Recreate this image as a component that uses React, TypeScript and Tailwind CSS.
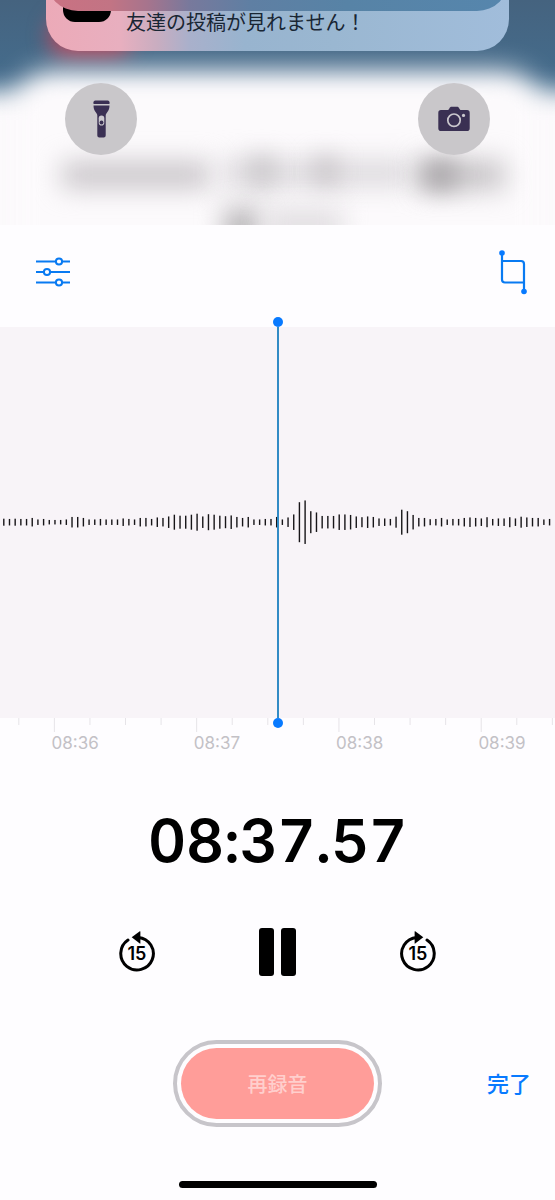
import React from 'react';

// Bar heights in px, one sample every 5.685px
const samples = [
  7, 6.5, 7, 6.5, 6.5, 8.5, 5.5, 6.5, 4.5, 4.5, 4.5, 5.5, 10.5, 10.5, 8.5, 5.5, 5.5, 6.5, 5.5, 5.5,
  5.5, 7.5, 6.5, 5.5, 8.5, 8.5, 6.5, 9.5, 8.5, 11.5, 15, 13, 13, 15, 17, 11.5, 16, 15, 13, 12,
  13.5, 10.5, 8.5, 10.5, 5.5, 5.5, 6.5, 6.5, 10.5, 5.5, 9.5, 15.5, 40, 43.5, 22, 19.5, 12.5, 12.5,
  12.5, 15.5, 15.5, 14.5, 11.5, 10, 11.5, 10.5, 7.5, 7.5, 6.5, 11, 25, 22, 14.5, 8.5, 8.5, 6, 6.5,
  8.5, 5.5, 6.5, 6.5, 8.5, 9.5, 8.5, 7.5, 10, 6.5, 7.5, 7.5, 10, 7.5, 11, 9.5, 8.5, 8.5, 5.5, 6.5,
];

const ticks = Array.from({ length: 16 }, (_, i) => ({ x: 18.8 + i * 35.57, major: i % 4 === 1 }));

const labels = ['08:36', '08:37', '08:38', '08:39'];

const FlashlightIcon: React.FC = () => (
  <svg width="17" height="38" viewBox="0 0 17 38" fill="#3a3053" aria-hidden="true">
    <path d="M.5 4V2.2Q.5.5 2.3.5h12.4q1.8 0 1.8 1.7V4z" />
    <path d="M.5 5.5h16c0 4-1.3 5.500-2.8 7.400-.7.9-1 1.600-1 2.600v20q0 2-2 2H6.300q-2 0-2-2v-20c0-1-.3-1.700-1-2.600C1.800 11 .5 9.500.5 5.500z" />
    <rect x="5.700" y="15.500" width="5.600" height="10" rx="2.800" fill="#cbc8ce" />
    <circle cx="8.500" cy="22.500" r="1.900" />
  </svg>
);

const CameraIcon: React.FC = () => (
  <svg width="32" height="26" viewBox="0 0 32 26" fill="#3a3053" aria-hidden="true">
    <path d="M3 4h6.500c.8 0 1.200-.5 1.700-1.300C11.800 1.300 12.500.7 13.800.7h5c1.300 0 2 .6 2.600 2C21.900 3.500 22.300 4 23.100 4H29q2.700 0 2.700 2.700v15.500q0 2.800-2.700 2.800H3Q.3 25 .3 22.200V6.700Q.3 4 3 4z" />
    <circle cx="16" cy="14.200" r="6.200" fill="none" stroke="#cbc8ce" strokeWidth="1.700" />
    <circle cx="25.500" cy="9.400" r="1.600" fill="#cbc8ce" />
  </svg>
);

const SlidersIcon: React.FC = () => (
  <svg width="34" height="30" viewBox="0 0 34 30" fill="#fefdff" stroke="#087af2" strokeWidth="2" aria-hidden="true">
    <path d="M0 4.500h34M0 15h34M0 25.500h34" />
    <circle cx="23" cy="4.500" r="3.100" />
    <circle cx="11" cy="15" r="3.100" />
    <circle cx="23" cy="25.500" r="3.100" />
  </svg>
);

const TrimIcon: React.FC = () => (
  <svg width="28" height="46" viewBox="0 0 28 46" fill="none" stroke="#087af2" strokeWidth="2.200" aria-hidden="true">
    <path d="M3 4v26.500q0 3 3 3h19M3 12h19q3 0 3 3V42" />
    <g fill="#087aff" stroke="none">
      <circle cx="3" cy="4" r="2.800" />
      <circle cx="25" cy="42.500" r="2.800" />
    </g>
  </svg>
);

const SkipButton: React.FC<{ forward?: boolean; label: string }> = ({ forward, label }) => (
  <button aria-label={label}>
    <svg width="38" height="42" viewBox="0 0 38 42" aria-hidden="true">
      <g transform={forward ? 'translate(38 0) scale(-1 1)' : undefined}>
        <path d="M20.300 6.400A16.300 16.300 0 1 1 10 9.100" fill="none" stroke="#000" strokeWidth="3" strokeLinecap="round" />
        <path d="M13.700 6.200L21.800.3q.6-.3.6.4v11.400q0 .8-.6.4z" />
      </g>
      <text x="18.800" y="29" textAnchor="middle" className="font-['Inter'] text-[18px] font-semibold tracking-[-0.200px]">
        15
      </text>
    </svg>
  </button>
);

const LockScreenPeek: React.FC = () => (
  <header className="relative isolate h-[225px] shrink-0 overflow-hidden bg-[#446583]">
    <div className="absolute inset-x-0 top-0 -z-10 h-[110px] bg-linear-to-b from-[#45637f] to-[#447092]" />
    <div className="absolute left-[48px] top-[14px] -z-10 h-[44px] w-[85px] rounded-3xl bg-[#b04c62] blur-[10px]" />
    <div className="absolute -left-10 -right-10 top-[91px] -z-10 h-[190px] bg-[#fcfafc] blur-[12px]" />
    <div className="absolute left-[16px] right-[16px] top-[71px] -z-10 h-[190px] rounded-t-[36px] bg-[#fcfafc] blur-[14px]" />
    {/* blurred title behind the glass */}
    <div className="absolute left-[62px] top-[162px] -z-10 h-[26px] w-[148px] bg-[#c8c4c8] blur-[13px]" />
    <div className="absolute left-[222px] top-[160px] -z-10 h-[26px] w-[190px] bg-[#dcd9dd] blur-[13px]" />
    <div className="absolute left-[250px] top-[158px] -z-10 h-[26px] w-[24px] bg-[#c5c2c5] blur-[12px]" />
    <div className="absolute left-[315px] top-[158px] -z-10 h-[26px] w-[22px] bg-[#c5c0c4] blur-[12px]" />
    <div className="absolute left-[419px] top-[160px] -z-10 h-[30px] w-[86px] bg-[#c7c4c7] blur-[13px]" />
    <div className="absolute left-[423px] top-[162px] -z-10 h-[26px] w-[34px] bg-[#a5a2a5] blur-[12px]" />
    <div className="absolute left-[224px] top-[208px] -z-10 h-[40px] w-[36px] bg-[#b7b4b7] blur-[13px]" />
    <div className="absolute left-[265px] top-[208px] -z-10 h-[36px] w-[78px] bg-[#e2dfe2] blur-[13px]" />

    <div className="relative mx-[46px] h-[51px] overflow-hidden rounded-b-[32px] bg-[linear-gradient(90deg,#ecaab8_0%,#e8afbf_16%,#c9adc0_24%,#a9b0cb_31%,#98b4cf_43%,#9ab7d1_62%,#a1bddb_100%)]">
      <div className="absolute left-[17px] top-0 h-[22px] w-[48px] rounded-b-[12px] bg-black" />
      <p className="pl-[80px] pt-[8px] font-['Noto_Sans_CJK_JP',sans-serif] text-[20px] leading-[28px] whitespace-nowrap text-[#192634]">
        友達の投稿が見れません！
      </p>
      <div className="absolute inset-x-0 -top-[69px] h-[80px] rounded-[32px] bg-[linear-gradient(90deg,#ca7182_0%,#c27484_14%,#a6748d_22%,#78799c_31%,#5f7fa3_44%,#5783a6_65%,#5686ad_100%)]" />
    </div>

    <div className="mt-[32px] flex justify-between px-[65px]">
      <button aria-label="Flashlight" className="flex size-[72px] items-center justify-center rounded-full bg-[#c9c7ca]">
        <FlashlightIcon />
      </button>
      <button aria-label="Camera" className="flex size-[72px] items-center justify-center rounded-full bg-[#c9c7ca]">
        <CameraIcon />
      </button>
    </div>
  </header>
);

const Waveform: React.FC = () => (
  <section className="relative">
    <div className="h-[391px] bg-[#f8f4f8]">
      <svg width="555" height="391" viewBox="0 0 555 391" aria-hidden="true">
        {samples.map((h, i) => (
          <rect key={i} x={3.1 + i * 5.685} y={195.2 - h / 2} width="1.400" height={h} fill="#171518" />
        ))}
      </svg>
    </div>
    <svg className="block" width="555" height="15" viewBox="0 0 555 15" aria-hidden="true">
      {ticks.map(({ x, major }) => (
        <rect key={x} x={x - 0.5} y="0" width="1" height={major ? 14 : 7} fill="#e6e4e8" />
      ))}
    </svg>
    <div className="flex gap-[94.300px] pl-[51.500px] text-[17px] leading-[20px] text-[#c3c1c6]">
      {labels.map((label) => (
        <span key={label} className="w-[48px] shrink-0 whitespace-nowrap">{label}</span>
      ))}
    </div>
    {/* playhead */}
    <div className="absolute left-[273px] -top-[10px] flex h-[411px] w-[10px] flex-col items-center">
      <span className="size-[10px] shrink-0 rounded-full bg-[#087aff]" />
      <span className="w-[1.500px] flex-1 bg-[#328bc5]" />
      <span className="size-[10px] shrink-0 rounded-full bg-[#087aff]" />
    </div>
  </section>
);

const App: React.FC = () => (
  <main className="flex h-[1200px] w-[555px] flex-col overflow-hidden bg-[#fefdff] font-['Inter','Noto_Sans_CJK_JP',sans-serif] text-black">
    <LockScreenPeek />
    <div className="flex h-[102px] shrink-0 items-center justify-between pl-[36px] pr-[28px] pb-[9px]">
      <button aria-label="Options"><SlidersIcon /></button>
      <button aria-label="Trim"><TrimIcon /></button>
    </div>
    <Waveform />
    <p className="mt-[53px] text-center text-[59px] leading-[70px] font-[560] tracking-[-0.200px] whitespace-nowrap tabular-nums">
      08:37.57
    </p>
    <div className="mt-[50px] flex h-[52px] items-center justify-between px-[118px]">
      <SkipButton label="Back 15 seconds" />
      <button aria-label="Pause" className="flex gap-[7px]">
        <span className="h-[48px] w-[15px] rounded-[3px] bg-black" />
        <span className="h-[48px] w-[15px] rounded-[3px] bg-black" />
      </button>
      <SkipButton forward label="Forward 15 seconds" />
    </div>
    <div className="mt-[62px] grid grid-cols-[1fr_209px_1fr] items-center">
      <button className="col-start-2 h-[87px] rounded-full border-4 border-[#c7c5ca] p-[4px]">
        <span className="flex h-full items-center justify-center rounded-full bg-[#ff9d99] pt-[2px] text-[20px] font-medium text-[#ffcfcd]">
          再録音
        </span>
      </button>
      <button className="justify-self-end pt-[2px] pr-[24px] text-[22px] font-medium text-[#087aff]">完了</button>
    </div>
    <div className="mx-auto mt-[54px] h-[7px] w-[198px] rounded-full bg-black" />
  </main>
);

export default App;
